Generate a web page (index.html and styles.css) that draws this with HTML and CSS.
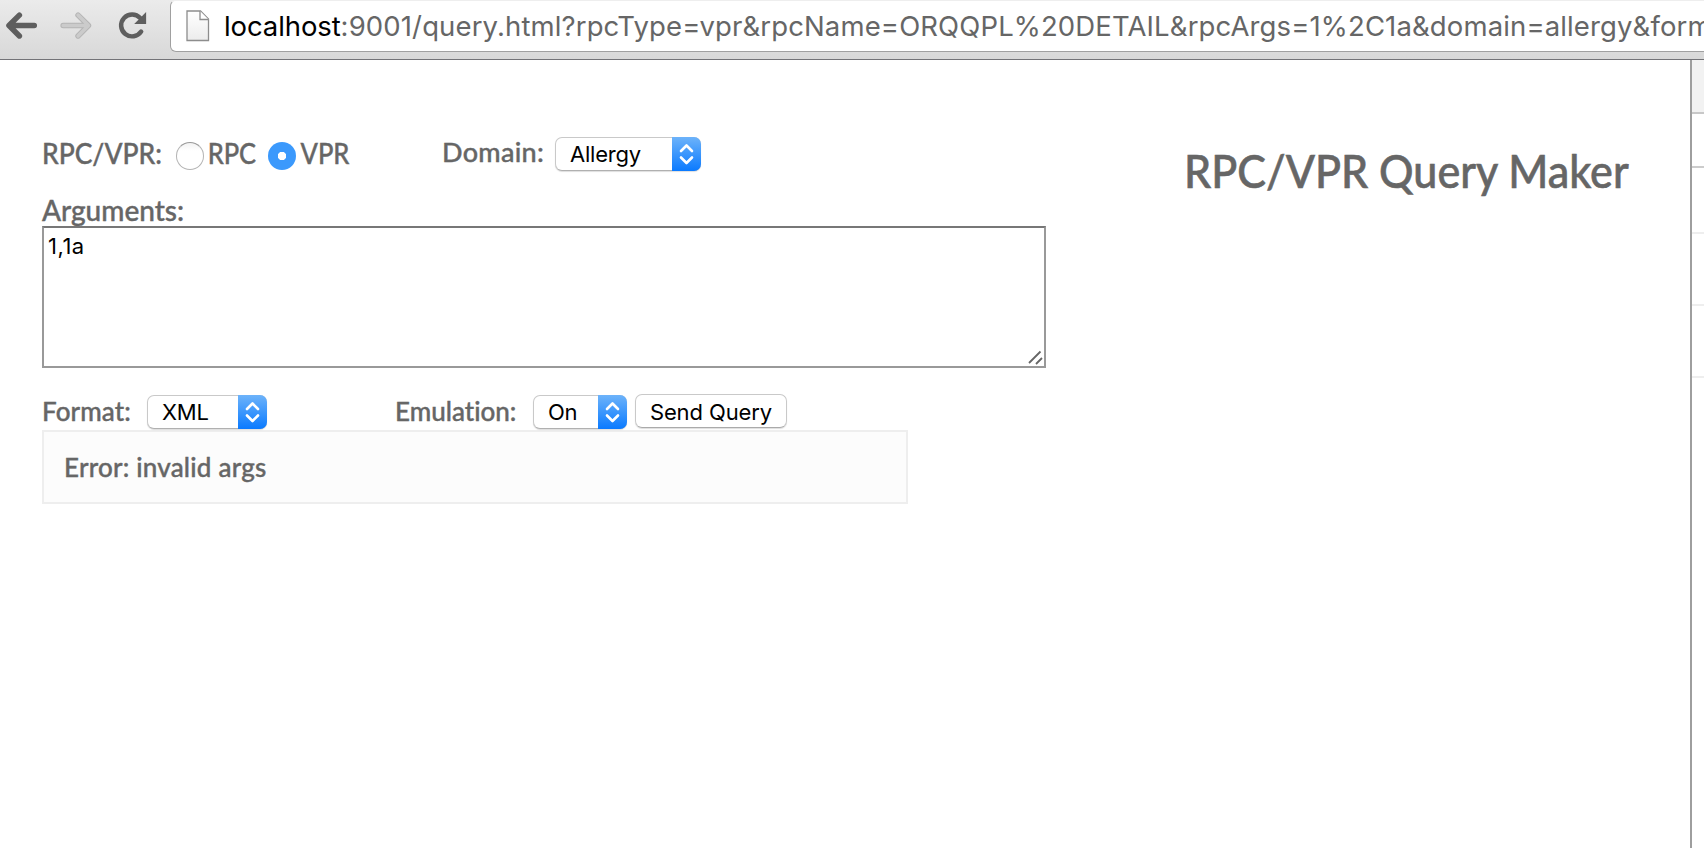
FILE: index.html
```html
<!DOCTYPE html>
<html lang="en">
<head>
<meta charset="utf-8">
<title>RPC/VPR Query Maker</title>
<link rel="stylesheet" href="styles.css">
</head>
<body>
<header class="toolbar">
  <svg class="nav" width="171" height="59" viewBox="0 0 171 59" fill="none" stroke-linecap="round" stroke-linejoin="round">
    <path d="M34.500 25.500H10M19.500 15L9 25.500L19.500 36" stroke="#5e5e5e" stroke-width="5.500"/>
    <path d="M63.500 25.500H88M78.500 15L89 25.500L78.500 36" stroke="#b5b5b5" stroke-width="5.500"/>
    <path d="M63.500 25.500H88M78.500 15L89 25.500L78.500 36" stroke="#cbcbcb" stroke-width="3.500"/>
    <path d="M142 31.500A11 11 0 1 1 141 18" stroke="#5e5e5e" stroke-width="4.500"/>
    <path d="M147 12V24H135Z" fill="#5e5e5e"/>
  </svg>
  <div class="address">
    <svg class="page-icon" width="24" height="33" viewBox="0 0 24 33">
      <defs><linearGradient id="paper" x2="0" y2="1"><stop stop-color="#fff"/><stop offset="1" stop-color="#ececec"/></linearGradient></defs>
      <path d="M1 1H14.500L22.500 9V30.500H1Z" fill="url(#paper)" stroke="#8d8d8d" stroke-width="1.300"/>
      <path d="M14 1V9.500H22.500" fill="#fff" stroke="#8d8d8d" stroke-width="1.300"/>
    </svg>
    <span class="url"><span class="host">localhost</span>:9001/query.html?rpcType=vpr&amp;rpcName=ORQQPL%20DETAIL&amp;rpcArgs=1%2C1a&amp;domain=allergy&amp;form</span>
  </div>
</header>
<div class="content">
  <main class="page">
    <form class="query">
      <div class="row type-row">
        <span class="label type-label">RPC/VPR:</span>
        <span class="radio"></span><span class="label rpc">RPC</span>
        <span class="radio checked"></span><span class="label vpr">VPR</span>
        <span class="label domain-label">Domain:</span>
        <span class="select domain"><span class="value">Allergy</span><span class="stepper"><svg width="29" height="34" viewBox="0 0 29 34"><path d="M9 14l5.500-5.500L20 14M9 20.500l5.500 5.500L20 20.500"/></svg></span></span>
      </div>
      <div class="label args-label"><span>Arguments:</span></div>
      <div class="textarea"><span>1,1a</span>
        <svg class="grip" width="16" height="16" viewBox="0 0 16 16"><path d="M1 13L12.500 1.500M8 14L14 8"/></svg>
      </div>
      <div class="row format-row">
        <span class="label small format-label">Format:</span>
        <span class="select format"><span class="value">XML</span><span class="stepper"><svg width="29" height="34" viewBox="0 0 29 34"><path d="M9 14l5.500-5.500L20 14M9 20.500l5.500 5.500L20 20.500"/></svg></span></span>
        <span class="label small emulation-label">Emulation:</span>
        <span class="select emulation"><span class="value">On</span><span class="stepper"><svg width="29" height="34" viewBox="0 0 29 34"><path d="M9 14l5.500-5.500L20 14M9 20.500l5.500 5.500L20 20.500"/></svg></span></span>
        <span class="button">Send Query</span>
      </div>
      <div class="result"><span>Error: invalid args</span></div>
    </form>
    <h1 class="title"><span>RPC/VPR Query Maker</span></h1>
  </main>
  <aside class="panel">
    <div class="cell head"></div>
    <div class="cell first"></div>
    <div class="cell second"></div>
    <div class="cell"></div>
    <div class="cell"></div>
  </aside>
</div>
</body>
</html>
```
FILE: styles.css
```css
* { box-sizing: border-box; }
body { margin: 0; height: 848px; overflow: hidden; background: #fff; color: #666; font-family: Lato, "Open Sans", sans-serif; font-variant-ligatures: none; }
.toolbar { display: flex; height: 60px; background: linear-gradient(#ebebeb, #d8d8d8); border-bottom: 1px solid #737377; overflow: hidden; }
.nav { flex: none; width: 170px; }
.address { flex: none; display: flex; width: 1560px; height: 52px; border: 1px solid #a0a0a0; border-top-color: #eee; border-radius: 6px; background: #fff; }
.page-icon { flex: none; margin: 9px 0 0 15px; }
.url { margin-left: 14px; font: 27.5px/50px Inter, sans-serif; color: #666; white-space: nowrap; letter-spacing: 0.13px; }
.host { color: #000; letter-spacing: -0.1px; }
.content { display: flex; height: 788px; }
.page { display: flex; width: 1690px; padding-left: 42px; }
.query { width: 1004px; padding-top: 76px; }
.row { display: flex; white-space: nowrap; }
.type-row { height: 61px; }
.label { font-size: 28px; line-height: 34px; font-weight: 500; white-space: nowrap; -webkit-text-stroke: 0.4px #666; }
.small { font-size: 26px; }
.type-label { width: 134px; transform: scaleX(0.945); transform-origin: left; }
.radio { flex: none; width: 28px; height: 28px; margin-top: 6px; border: 1px solid #b4b4b4; border-top-color: #999; border-radius: 50%; background: linear-gradient(#f2f2f2, #fff 30%); }
.radio.checked { border: 0; background: radial-gradient(circle, #fff 4px, #3b99fc 4.500px); }
.rpc { width: 64px; padding-left: 4px; transform: scaleX(0.91); transform-origin: left; }
.vpr { width: 146px; padding-left: 5px; transform: scaleX(0.91); transform-origin: left; }
.domain-label { width: 113px; margin-top: -1px; font-size: 27px; letter-spacing: 0.3px; }
.select { flex: none; display: flex; height: 34px; border: 1px solid #c9c9c9; border-bottom-color: #b0b0b0; border-radius: 7px; background: #fff; box-shadow: 0 1px 1px #0002; color: #000; font: 22px/33px Inter, sans-serif; }
.value { flex: 1; padding-left: 14px; letter-spacing: -0.2px; }
.stepper { width: 29px; height: 34px; margin: -1px -1px 0 0; border-radius: 0 7px 7px 0; background: linear-gradient(#6db3fa, #0a7aff); }
.stepper svg { display: block; fill: none; stroke: #fff; stroke-width: 2.600; stroke-linecap: round; stroke-linejoin: round; }
.domain { width: 146px; margin-top: 1px; }
.args-label { height: 29px; line-height: 26px; }
.textarea { position: relative; height: 142px; border: 2px solid #999; border-top-color: #777; padding: 4px 0 0 4px; color: #000; font: 22px/28px Inter, sans-serif; letter-spacing: 0.5px; }
.grip { position: absolute; right: 0; bottom: 0; fill: none; stroke: #666; stroke-width: 1.800; }
.format-row { height: 62px; padding-top: 26px; }
.format-label { width: 105px; line-height: 34px; letter-spacing: 0.1px; }
.format { width: 120px; margin-top: 1px; }
.emulation-label { width: 138px; margin-left: 128px; line-height: 34px; }
.emulation { width: 94px; margin-top: 1px; }
.button { width: 152px; height: 34px; margin-left: 8px; border: 1px solid #c9c9c9; border-bottom-color: #aaa; border-radius: 7px; box-shadow: 0 1px 1px #0002; color: #000; font: 22px/35px Inter, sans-serif; text-align: center; letter-spacing: -0.1px; }
.result { width: 866px; height: 74px; border: 2px solid #eee; background: #fcfcfc; padding-left: 20px; font-size: 26px; line-height: 70px; font-weight: 500; letter-spacing: 0.22px; -webkit-text-stroke: 0.4px #666; }
.title { margin: 83px 0 0 138px; font-size: 46px; line-height: 56px; font-weight: 500; white-space: nowrap; transform: scaleX(0.936); transform-origin: left; -webkit-text-stroke: 0.6px #666; }
.title { flex: none; align-self: flex-start; }
.panel { flex: none; width: 14px; border-left: 2px solid #9e9e9e; }
.cell { height: 72px; border-bottom: 2px solid #eee; }
.head { height: 54px; background: #f2f2f2; border-color: #c8c8c8; }
.first { height: 54px; border-color: #ccc; }
.second { height: 66px; }
```
